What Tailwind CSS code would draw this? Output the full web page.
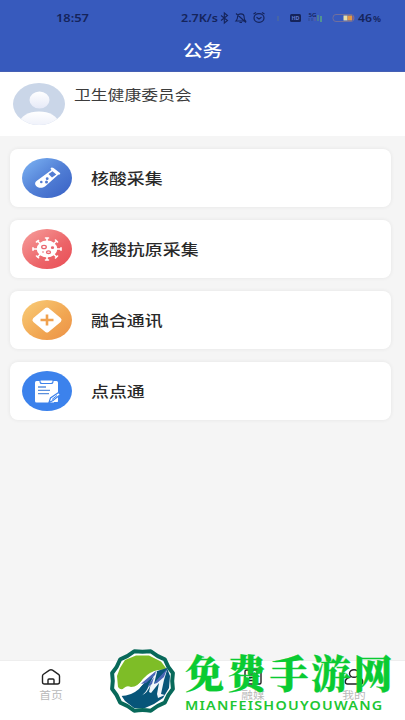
<!DOCTYPE html>
<html lang="zh-CN">
<head>
<meta charset="utf-8">
<meta name="viewport" content="width=device-width, initial-scale=1">
<title>公务</title>
<script src="https://cdn.jsdelivr.net/npm/@tailwindcss/browser@4"></script>
</head>
<body class="bg-[#f5f5f5] font-['Liberation_Sans','Noto_Sans_CJK_SC',sans-serif]">
<div class="relative flex h-[720px] w-[405px] flex-col overflow-hidden">
  <header class="flex h-[72px] shrink-0 flex-col border-b border-[#4660b4] bg-[#375abd]">
    <div class="flex h-9 items-center pl-14 text-[#15245b]">
      <svg class="h-9 w-[349px]" viewBox="56 0 349 36" fill="none" stroke="#15245b">
        <g fill="#15245b" stroke="none" font-family="Noto Sans, sans-serif" font-weight="600" font-size="10.5">
          <text x="56" y="22" textLength="33" lengthAdjust="spacingAndGlyphs">18:57</text>
          <text x="181" y="22" textLength="37" lengthAdjust="spacingAndGlyphs">2.7K/s</text>
          <text x="358" y="22" textLength="14" lengthAdjust="spacingAndGlyphs">46</text>
          <text x="373" y="22" font-size="8" textLength="8" lengthAdjust="spacingAndGlyphs">%</text>
          <text x="308.500" y="17" font-size="5.500" textLength="8" lengthAdjust="spacingAndGlyphs">5G</text>
        </g>
        <path d="M221 15.500l6.500 5-3.200 2.500V13l3.200 2.500-6.500 5" stroke-width="1.100"/>
        <path d="M236 21h9.500c-1.500-1.500-1.300-2.500-1.400-4.500-.3-3.500-6-3.500-6.500 0-.1 2-.1 3-1.600 4.500zM239.500 22.500h2.500M236 13.500l10 9" stroke-width="1.100"/>
        <ellipse cx="259" cy="18" rx="5" ry="4.300" stroke-width="1.200"/>
        <path d="M256.500 17.200l2.500 1.800 2.500-1.800M253.500 14l2.500-1.500M264.500 14l-2.500-1.500" stroke-width="1.100"/>
        <path d="M278 16v5" stroke="#56708f"/>
        <rect x="290" y="14" width="11" height="8" rx="1.500" fill="#15245b" stroke="none"/>
        <text x="291.500" y="20" fill="#607bd1" stroke="none" font-family="Noto Sans, sans-serif" font-weight="700" font-size="5.500" textLength="8" lengthAdjust="spacingAndGlyphs">HD</text>
        <path d="M309 18v3M312 18v3" stroke="#31498f"/>
        <path d="M315 17v4" stroke="#6b5c9b"/>
        <path d="M318 15v6" stroke="#5b9f72"/><path d="M321 16v6" stroke="#58a386" stroke-width="1.600"/>
        <rect x="333" y="14.500" width="21" height="7" rx="3" stroke="#716f9c"/>
        <rect x="343.500" y="15.500" width="4" height="5" fill="#e7dfaa" stroke="none"/>
        <rect x="347.500" y="15.500" width="4.500" height="5" fill="#e39843" stroke="none"/>
        <path d="M353 16v4" stroke="#b56a67"/>
      </svg>
    </div>
    <h1 class="flex h-7 items-center justify-center pt-px text-[16.5px] leading-7 font-medium text-white"><span class="inline-block scale-x-[1.2]">公务</span></h1>
  </header>

  <section class="flex h-16 shrink-0 bg-white pl-[13px]">
    <svg class="mt-[11px] h-[42px] w-[52px]" viewBox="0 0 52 42">
      <defs><clipPath id="avatar"><ellipse cx="26" cy="21" rx="26" ry="21"/></clipPath>
      <linearGradient id="person" x1="0" y1="0" x2="0" y2="1"><stop stop-color="#fff"/><stop offset="1" stop-color="#e5e9f7"/></linearGradient></defs>
      <g clip-path="url(#avatar)"><path fill="#cad6e8" d="M0 0h52v42H0z"/><ellipse cx="26.500" cy="17" rx="10" ry="8.600" fill="url(#person)"/><ellipse cx="26" cy="39.500" rx="19" ry="11" fill="url(#person)"/></g>
    </svg>
    <p class="mt-[13px] ml-[9px] origin-left scale-x-[1.2] text-[14px] leading-5 text-[#3c3c3c]">卫生健康委员会</p>
  </section>

  <main class="flex flex-1 flex-col gap-[13px] pt-[13px] pr-[14px] pl-[10px]">
    <article class="flex h-[58px] items-center rounded-lg bg-white pl-3 shadow-[0_0_4px_#00000012]">
      <svg class="h-10 w-[50px]" viewBox="0 0 50 40">
        <defs><linearGradient id="blue" x1="0" y1="0" x2="1" y2="1"><stop stop-color="#7fb6f5"/><stop offset=".5" stop-color="#5280d6"/><stop offset="1" stop-color="#3860c4"/></linearGradient></defs>
        <ellipse cx="25" cy="20" rx="25" ry="20" fill="url(#blue)"/>
        <path fill="#fff" d="M28.500 10.500q1-1.800 3-.5l6.500 5q1 1.400-1.800 1.800L23 28.500c-5.500 4-13-1.800-8.500-5.500L29.500 12z"/>
        <path fill="#527cd3" d="M26.500 16l4-2.800 3.800 3.300-4.300 3z"/><circle cx="25.200" cy="20.700" r="1.400" fill="#527cd3"/><circle cx="24.500" cy="24" r="1.500" fill="#527cd3"/><circle cx="19.300" cy="24" r="1.300" fill="#527cd3"/>
      </svg>
      <span class="mt-0.5 ml-[19px] origin-left scale-x-[1.195] text-[15px] leading-5 font-medium text-[#292929]">核酸采集</span>
    </article>
    <article class="flex h-[58px] items-center rounded-lg bg-white pl-3 shadow-[0_0_4px_#00000012]">
      <svg class="h-10 w-[50px]" viewBox="0 0 50 40">
        <defs><linearGradient id="red" x1="0" y1="0" x2="1" y2="1"><stop stop-color="#f7a09d"/><stop offset=".6" stop-color="#ec6468"/><stop offset="1" stop-color="#e94d55"/></linearGradient></defs>
        <ellipse cx="25" cy="20" rx="25" ry="20" fill="url(#red)"/>
        <g stroke="#fff" stroke-width="1.600" fill="#fff" stroke-linecap="round"><ellipse cx="25" cy="20" rx="9.500" ry="7.700"/><path d="M25 12V9m-1.500 0h3M25 28v3m-1.500 0h3M15 20h-4m0-1.300v2.600M35 20h4m0-1.300v2.600M18 14.500L15.500 12m-1 1l2-1.500M32 14.500l2.500-2.500m-1-1l2 2M18 25.500L15.500 28m-1-1l2 1.700M32 25.500l2.500 2.500m-1 1l2-2"/></g>
        <g fill="#fff" stroke="#e96770" stroke-width="1.300"><ellipse cx="22" cy="18" rx="2.300" ry="1.700"/><ellipse cx="26.500" cy="23.200" rx="2" ry="1.300"/><ellipse cx="30.500" cy="18.700" rx="1" ry=".7"/></g><circle cx="21" cy="23" r=".8" fill="#e96770"/>
      </svg>
      <span class="mt-0.5 ml-[19px] origin-left scale-x-[1.195] text-[15px] leading-5 font-medium text-[#292929]">核酸抗原采集</span>
    </article>
    <article class="flex h-[58px] items-center rounded-lg bg-white pl-3 shadow-[0_0_4px_#00000012]">
      <svg class="h-10 w-[50px]" viewBox="0 0 50 40">
        <defs><linearGradient id="orange" x1="0" y1="0" x2="1" y2="1"><stop stop-color="#f9cd78"/><stop offset=".6" stop-color="#f1a652"/><stop offset="1" stop-color="#ec9147"/></linearGradient></defs>
        <ellipse cx="25" cy="20" rx="25" ry="20" fill="url(#orange)"/>
        <path d="M25 10L37 20 25 30 13 20z" fill="#fff" stroke="#fff" stroke-width="5" stroke-linejoin="round"/><path d="M25 14.500v11M18.500 20h13" stroke="#f0a14e" stroke-width="2.600"/>
      </svg>
      <span class="mt-0.5 ml-[19px] origin-left scale-x-[1.195] text-[15px] leading-5 font-medium text-[#292929]">融合通讯</span>
    </article>
    <article class="flex h-[58px] items-center rounded-lg bg-white pl-3 shadow-[0_0_4px_#00000012]">
      <svg class="h-10 w-[50px]" viewBox="0 0 50 40">
        <ellipse cx="25" cy="20" rx="25" ry="20" fill="#3c82ec"/>
        <rect x="13" y="10" width="23" height="21.500" rx="1.500" fill="#fff"/><path d="M18 9h13v1.500q0 2-2 2h-9q-2 0-2-2z" fill="#fff" stroke="#3c82ec" stroke-width="1.100"/>
        <path d="M16 16h8M16 19.300h12M16 22.600h11" stroke="#5b90dd" stroke-width="1.300"/>
        <path d="M27 31.500l1.500-4.500 8-5.500 2 2-7.500 6z" fill="#fff" stroke="#3c82ec" stroke-width="1.200"/><path d="M30 28.500l5-4M32 31.500h4" stroke="#3c82ec"/>
      </svg>
      <span class="mt-0.5 ml-[19px] origin-left scale-x-[1.195] text-[15px] leading-5 font-medium text-[#292929]">点点通</span>
    </article>
  </main>

  <nav class="grid h-[60px] shrink-0 grid-cols-4 border-t border-[#eeeeee] bg-white text-[10px] leading-[14px] text-[#b9b9b9]">
    <div class="flex flex-col items-center pt-[7px]">
      <svg class="h-[18px] w-[22px]" viewBox="0 0 22 18" fill="none" stroke="#222" stroke-width="1.400"><path d="M2.500 8q0-1 1-1.700L9.500 2.200q1.500-1 3 0l6 4.100q1 .7 1 1.700v6q0 2-2 2h-13q-2 0-2-2zM8 16v-4q0-1 1-1h4q1 0 1 1v4"/></svg>
      <span class="mt-[3px] scale-x-[1.17]">首页</span>
    </div>
    <div class="flex flex-col items-center pt-[7px]">
      <svg class="h-[18px] w-[22px]" viewBox="0 0 22 18"><rect x="2" y="3" width="18" height="13" rx="2" fill="#375abd"/></svg>
    </div>
    <div class="flex flex-col items-center pt-[7px]">
      <svg class="h-[18px] w-[22px]" viewBox="0 0 22 18" fill="none" stroke="#222" stroke-width="1.400"><rect x="3" y="2" width="16" height="14" rx="1.500"/><path d="M7 2v4h8V2M7 9.500h5M7 12.500h7"/></svg>
      <span class="mt-[3px] scale-x-[1.17]">融媒</span>
    </div>
    <div class="flex flex-col items-center pt-[7px]">
      <svg class="h-[18px] w-[22px]" viewBox="0 0 22 18" fill="none" stroke="#222" stroke-width="1.400"><ellipse cx="11" cy="5.500" rx="4.500" ry="3.800"/><path d="M7.500 9Q2 10.500 2.300 14q.2 2 2.200 2h13q2 0 2.200-2 .3-3.500-5.200-5"/></svg>
      <span class="mt-[3px] scale-x-[1.17]">我的</span>
    </div>
  </nav>

  <svg class="absolute bottom-0 left-[105px] h-[80px] w-[300px]" viewBox="105 640 300 80">
    <path d="M134.300 651.300Q142.500 652 150.700 651.300Q157 656.500 164.800 659.400Q167.500 667 172.900 673.100Q171.500 681 172.900 688.900Q167.500 695 164.800 702.600Q157 705.500 150.700 710.700Q142.500 709.500 134.300 710.700Q128 705.500 120.200 702.600Q117.500 695 112.100 688.900Q113.500 681 112.100 673.100Q117.500 667 120.200 659.400Q128 656.500 134.300 651.300z" fill="#fff" stroke="#08695a" stroke-width="4" stroke-linejoin="round"/>
    <path d="M136 655.500h13l12 6 6 8-9 .5q-9 2-14 8-6 9-13 9-4-2-7 1-3 3-6-1l-1-11 3-8 5-8z" fill="#7ebd27"/>
    <path d="M121 695c12 0 21-9 28-17l8-7 10-3 3 8-1 12-6 10-9 6-9 4h-11l-9-7z" fill="#075579"/>
    <path d="M119 689q3 3 8 1 9-1 16-11l12-8-9 9-7 9q-8 7-18 7z" fill="#fff"/>
    <path d="M140 696q6-2 9-11l7-14 1 1-3 12 13-14-3 10-3 14 4 1-7 3-1-4 2-11-8 10-2-1 2-9q-3 11-11 13z" fill="#f1f5fa"/>
    <path d="M143 682q7-6 13-11l-1 4-9 8-5 1zM155 682l12-13-3 8-7 6-3 1zM149 684l5-7-2 7-4 3z" fill="#4866b5"/>
    <g fill="#0acb32" stroke="#0acb32" stroke-width=".3" font-family="Noto Serif CJK SC, Noto Sans CJK SC, sans-serif" font-weight="900" font-size="39">
      <text x="185" y="687.500">免</text><text x="227" y="687.500">费</text><text x="269.500" y="687.500">手</text><text x="311.500" y="687.500">游</text><text x="353.500" y="687.500">网</text>
    </g>
    <text transform="translate(185 710) scale(1.15 1)" x="0" y="0" fill="#20c632" font-family="Noto Sans, sans-serif" font-weight="600" font-size="12.500" textLength="171.500" lengthAdjust="spacing">MIANFEISHOUYOUWANG</text>
  </svg>
</div>
</body>
</html>
